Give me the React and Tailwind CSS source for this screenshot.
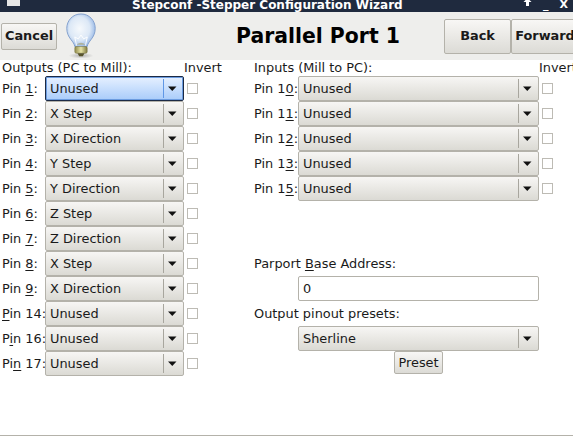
import React from "react";

const outputs = [
  { before: "Pin ", key: "1", after: ":", value: "Unused", focused: true },
  { before: "Pin ", key: "2", after: ":", value: "X Step" },
  { before: "Pin ", key: "3", after: ":", value: "X Direction" },
  { before: "Pin ", key: "4", after: ":", value: "Y Step" },
  { before: "Pin ", key: "5", after: ":", value: "Y Direction" },
  { before: "Pin ", key: "6", after: ":", value: "Z Step" },
  { before: "Pin ", key: "7", after: ":", value: "Z Direction" },
  { before: "Pin ", key: "8", after: ":", value: "X Step" },
  { before: "Pin ", key: "9", after: ":", value: "X Direction" },
  { before: "", key: "P", after: "in 14:", value: "Unused" },
  { before: "P", key: "i", after: "n 16:", value: "Unused" },
  { before: "Pi", key: "n", after: " 17:", value: "Unused" },
];

const inputs = [
  { before: "Pin 1", key: "0", after: ":" },
  { before: "Pin 1", key: "1", after: ":" },
  { before: "Pin 1", key: "2", after: ":" },
  { before: "Pin 1", key: "3", after: ":" },
  { before: "Pin 1", key: "5", after: ":" },
];

function Mnemonic({ before, letter, after, className }) {
  return (
    <span className={`whitespace-pre ${className}`}>
      {before}
      <u className="underline-offset-2">{letter}</u>
      {after}
    </span>
  );
}

function Combo({ value, focused, className }) {
  const frame = focused
    ? "border-[#1c2a44] bg-gradient-to-b from-[#e6f0ff] to-[#a9ccfa] shadow-[inset_0_0_0_1px_#6c9ce0]"
    : "border-[#b4b2aa] bg-gradient-to-b from-[#f7f6f4] to-[#dbdad4]";
  return (
    <div className={`flex h-[25px] items-center rounded-[2px] border ${frame} ${className}`}>
      <span className="flex-1 pt-px pl-[4px] leading-none">{value}</span>
      <span className={`h-[19px] w-px ${focused ? "bg-[#5f97e6]" : "bg-[#a8a69e]"}`} />
      <svg width="19" height="6" viewBox="0 0 19 6" className="shrink-0">
        <path d="M4 0.5h8.500l-4.250 4.500z" fill="#111" />
      </svg>
    </div>
  );
}

function Checkbox() {
  return <span className="block h-[11px] w-[11px] border border-[#bdbbb4] bg-white" />;
}

function Button({ children, className }) {
  return (
    <div
      className={`flex items-center justify-center rounded-[2px] border border-[#b4b2aa] bg-gradient-to-b from-[#f8f7f5] to-[#dcdbd6] ${className}`}
    >
      {children}
    </div>
  );
}

function Bulb() {
  return (
    <svg width="32" height="46" viewBox="0 0 36 48" preserveAspectRatio="none" className="shrink-0">
      <defs>
        <radialGradient id="glass" cx="0.45" cy="0.45" r="0.6">
          <stop offset="0" stopColor="#f6f9fc" />
          <stop offset="0.6" stopColor="#dce8f6" />
          <stop offset="1" stopColor="#8fb2e4" />
        </radialGradient>
        <linearGradient id="base" x1="0" x2="1" y1="0" y2="0">
          <stop offset="0" stopColor="#8f8a4a" />
          <stop offset="0.5" stopColor="#e8e4a8" />
          <stop offset="1" stopColor="#7d783f" />
        </linearGradient>
        <radialGradient id="shade">
          <stop offset="0" stopColor="#888" stopOpacity="0.6" />
          <stop offset="1" stopColor="#888" stopOpacity="0" />
        </radialGradient>
      </defs>
      <ellipse cx="18" cy="44.5" rx="14" ry="3" fill="url(#shade)" />
      <path
        d="M18 1C8.500 1 2 8 2 16c0 5 2 8.500 4.500 11.500C8.500 30 10.500 32 11 35h14c.5-3 2.500-5 4.500-7.500C32 24.500 34 21 34 16 34 8 27.500 1 18 1z"
        fill="url(#glass)"
        stroke="#7e9ccb"
        strokeWidth="1"
      />
      <path d="M13 34l-2-9 4 2 3-4 3 4 4-2-2 9" fill="none" stroke="#fff" strokeWidth="1" />
      <path d="M13 33q5-4 10 0z" fill="#a9a57a" opacity="0.7" />
      <rect x="11" y="35" width="14" height="7" rx="1.500" fill="url(#base)" stroke="#6f6a38" strokeWidth="0.5" />
      <path d="M14 42h8l-2 3h-4z" fill="#57532c" />
    </svg>
  );
}

export default function App() {
  return (
    <div className="h-[436px] w-[573px] overflow-hidden bg-white font-['DejaVu_Sans',sans-serif] text-[12.9px] text-[#1a1a1a]">
      {/* Title bar */}
      <div className="flex h-[12px] items-end overflow-hidden bg-[#1f2a3e] text-white">
        <span className="ml-[7px] mb-[6px] h-[6px] w-[13px] bg-[#e6e6e6]" />
        <span className="ml-[112px] w-[274px] shrink-0 text-[12px] leading-[14px] font-bold whitespace-nowrap">
          Stepconf -Stepper Configuration Wizard
        </span>
        <span className="ml-[117px] flex w-[45px] shrink-0 items-end justify-between text-[11px] leading-[14px] font-bold">
          <svg width="9" height="10" viewBox="0 0 9 10" className="mb-[4px]">
            <path d="M4.500 0L8.500 4H6v4H3V4H.5z" fill="#fff" />
          </svg>
          <span>_</span>
          <span>X</span>
        </span>
      </div>

      {/* Header */}
      <div className="flex h-[48px] items-center bg-[#eeeeec]">
        <Button className="ml-[1px] h-[27px] w-[56px] shrink-0 font-bold">Cancel</Button>
        <span className="ml-[8px] flex h-[48px] items-center">
          <Bulb />
        </span>
        <h1 className="ml-[139px] w-[208px] shrink-0 text-[20.4px] font-bold text-black">Parallel Port 1</h1>
        <Button className="h-[35px] w-[67px] shrink-0 font-bold">Back</Button>
        <Button className="h-[35px] w-[68px] shrink-0 font-bold">Forward</Button>
      </div>

      {/* Pin columns */}
      <div className="flex">
        <div className="w-[254px] shrink-0">
          <div className="flex h-[16px] items-center pl-[2px]">
            <span className="w-[182px]">Outputs (PC to Mill):</span>
            <span>Invert</span>
          </div>
          {outputs.map((pin, index) => (
            <div key={index} className="flex h-[25px] items-center pl-[2px]">
              <Mnemonic before={pin.before} letter={pin.key} after={pin.after} className="w-[43px] shrink-0" />
              <Combo value={pin.value} focused={pin.focused} className="w-[139px] shrink-0" />
              <span className="ml-[3px]">
                <Checkbox />
              </span>
            </div>
          ))}
        </div>

        <div className="min-w-0 flex-1">
          <div className="flex h-[16px] items-center whitespace-nowrap">
            <span className="w-[285px] shrink-0">Inputs (Mill to PC):</span>
            <span>Invert</span>
          </div>
          {inputs.map((pin, index) => (
            <div key={index} className="flex h-[25px] items-center">
              <Mnemonic before={pin.before} letter={pin.key} after={pin.after} className="w-[44px] shrink-0" />
              <Combo value="Unused" className="w-[241px] shrink-0" />
              <span className="ml-[3px]">
                <Checkbox />
              </span>
            </div>
          ))}

          <div className="mt-[50px] flex h-[25px] items-center">
            <Mnemonic before="Parport " letter="B" after="ase Address:" />
          </div>
          <div className="flex h-[25px] items-center pl-[44px]">
            <div className="flex h-[25px] w-[241px] items-center rounded-[2px] border border-[#b4b2aa] bg-white pl-[4px]">0</div>
          </div>
          <div className="flex h-[25px] items-center">Output pinout presets:</div>
          <div className="pl-[44px]">
            <Combo value="Sherline" className="w-[241px]" />
          </div>
          <div className="flex w-[285px] justify-center pl-[44px]">
            <Button className="h-[23px] w-[49px]">Preset</Button>
          </div>
        </div>
      </div>

      <div className="mt-[59px] h-px bg-[#b4b2aa]" />
    </div>
  );
}
